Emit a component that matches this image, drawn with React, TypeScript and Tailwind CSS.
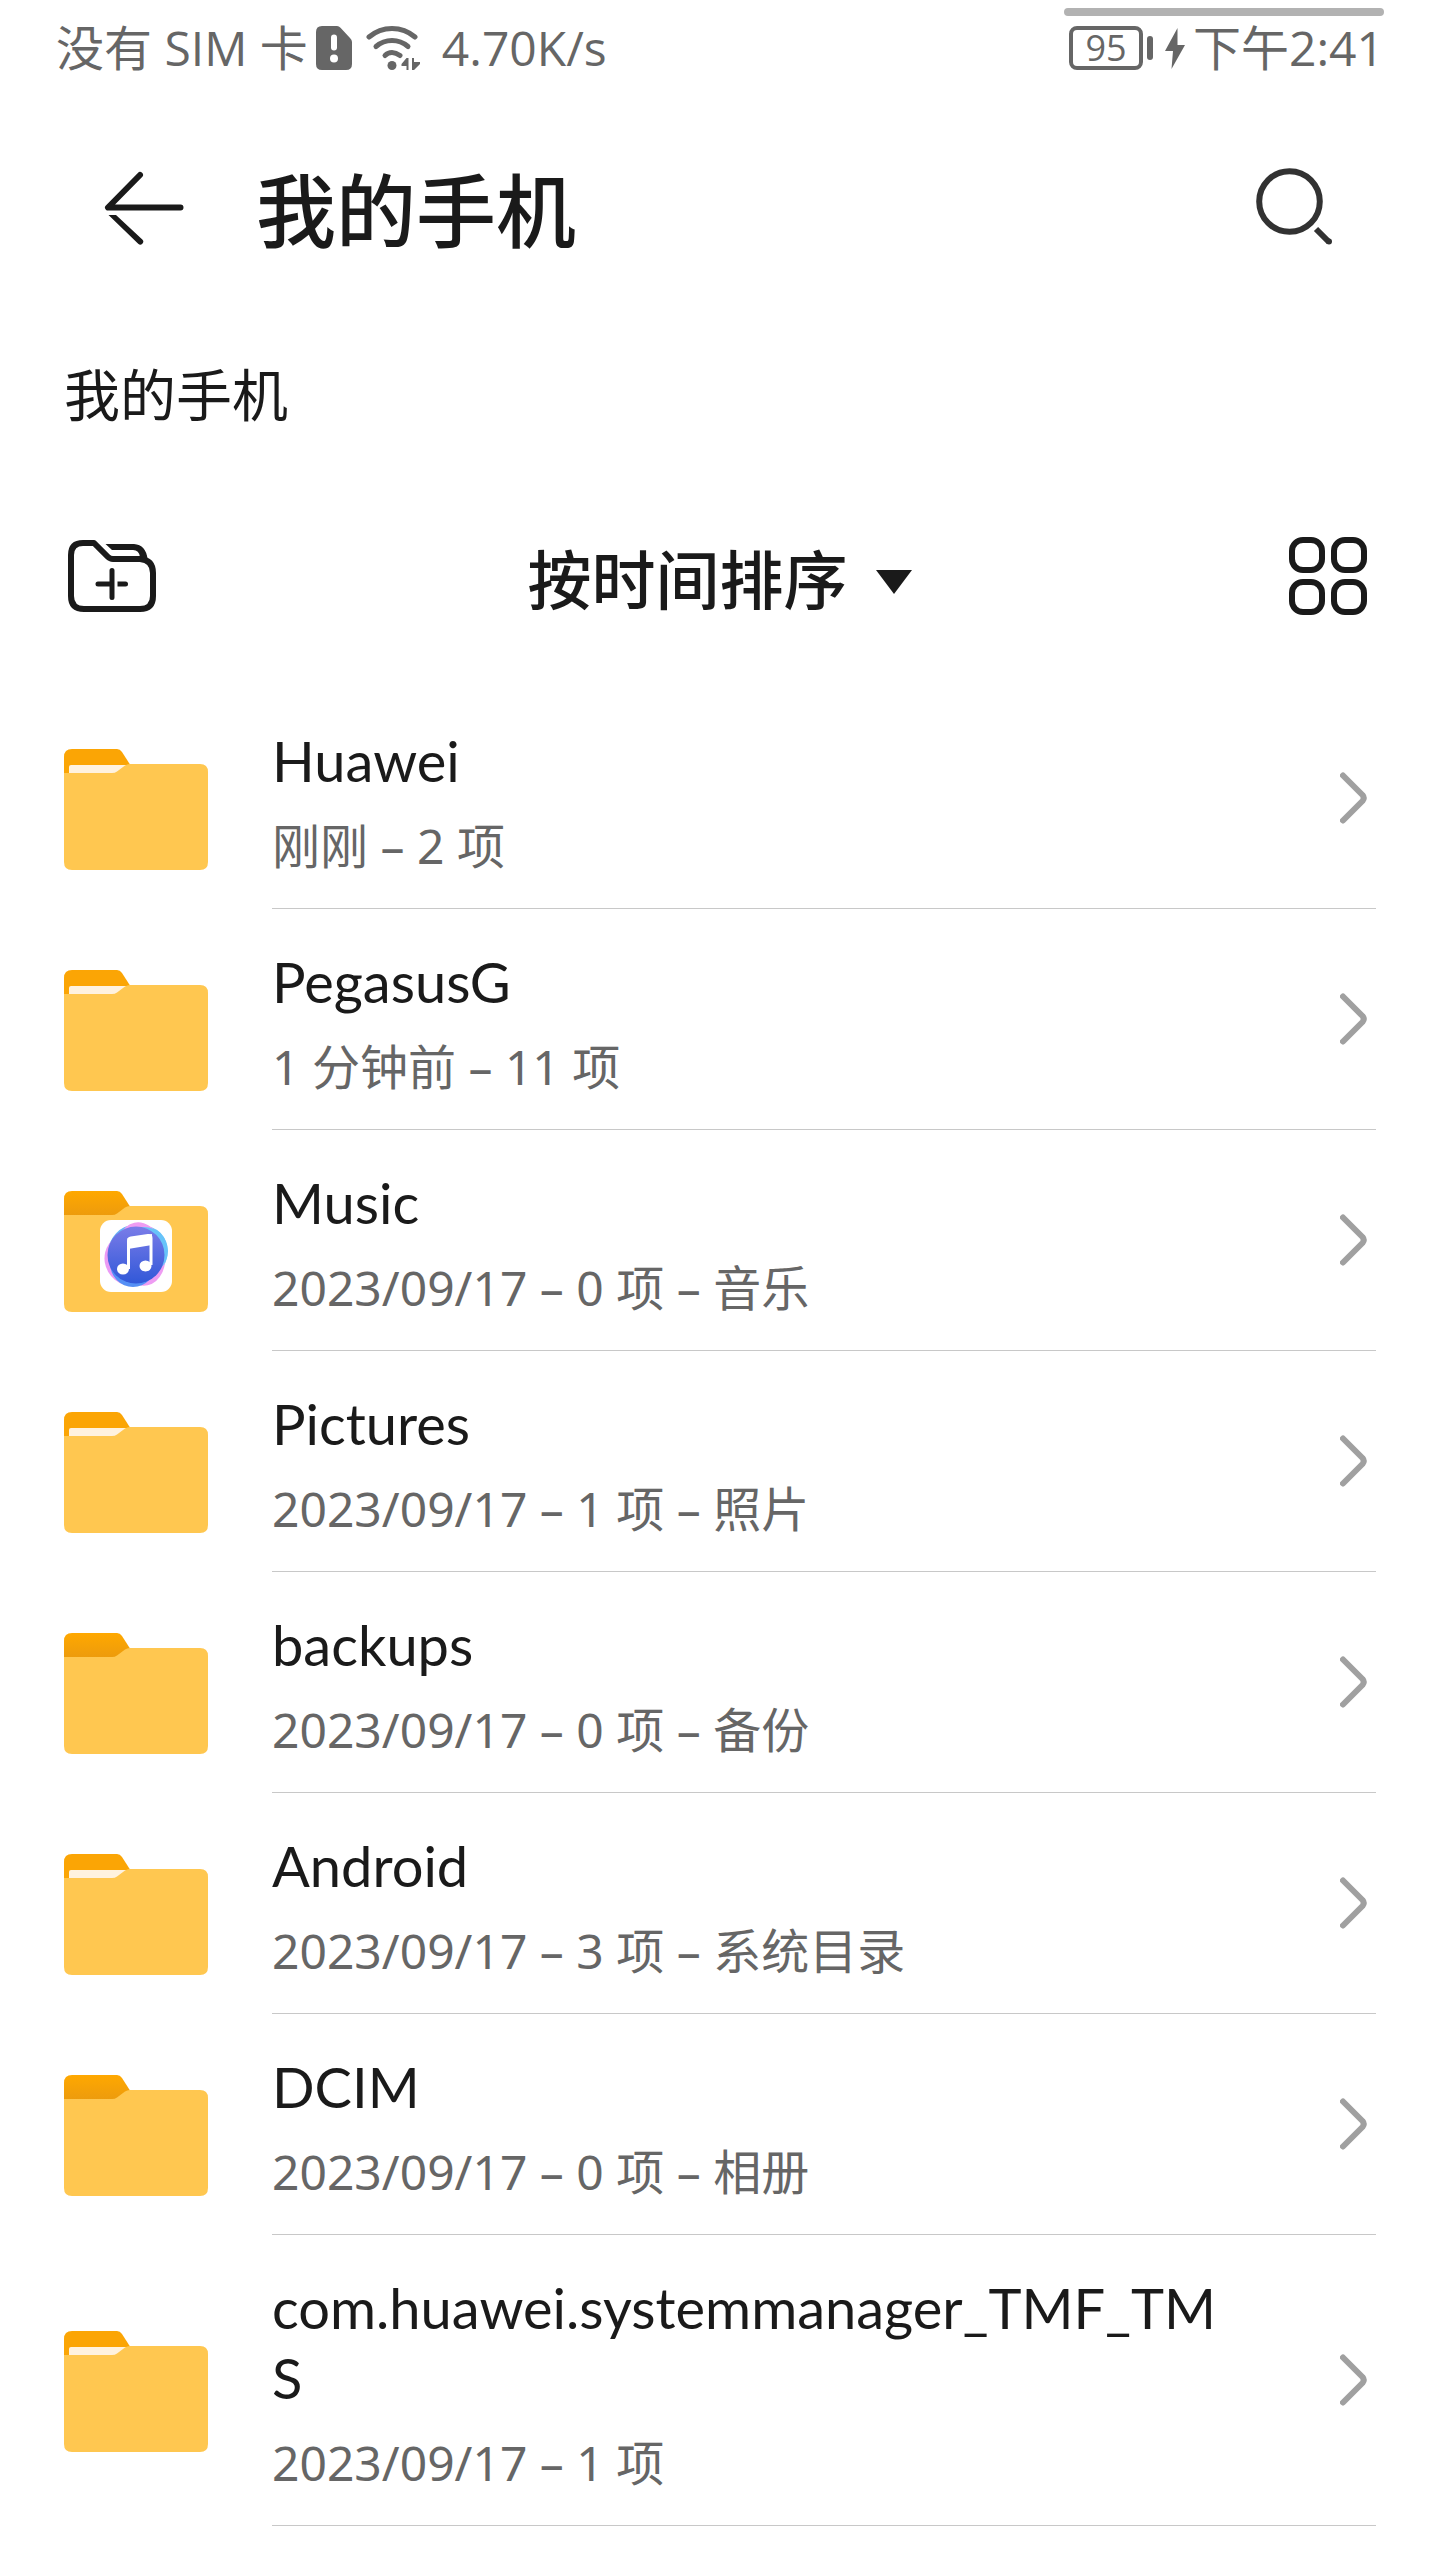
type FolderKind = "filled" | "empty" | "music";

type Entry = { name: string; detail: string; kind: FolderKind };

const entries: Entry[] = [
  { name: "Huawei", detail: "刚刚 – 2 项", kind: "filled" },
  { name: "PegasusG", detail: "1 分钟前 – 11 项", kind: "filled" },
  { name: "Music", detail: "2023/09/17 – 0 项 – 音乐", kind: "music" },
  { name: "Pictures", detail: "2023/09/17 – 1 项 – 照片", kind: "filled" },
  { name: "backups", detail: "2023/09/17 – 0 项 – 备份", kind: "empty" },
  { name: "Android", detail: "2023/09/17 – 3 项 – 系统目录", kind: "filled" },
  { name: "DCIM", detail: "2023/09/17 – 0 项 – 相册", kind: "empty" },
  { name: "com.huawei.systemmanager_TMF_TMS", detail: "2023/09/17 – 1 项", kind: "filled" },
];

function SimAlertIcon() {
  return (
    <svg className="h-11 w-9" viewBox="0 0 36 44" aria-hidden="true">
      <path d="M6 0H21Q23 0 24.500 1.800L34 12Q36 14 36 16V38Q36 44 30 44H6Q0 44 0 38V6Q0 0 6 0Z" fill="#666" />
      <path d="M18 11.500V21.500" stroke="#fff" strokeWidth="6" strokeLinecap="round" />
      <circle cx="18" cy="32.500" r="4" fill="#fff" />
    </svg>
  );
}

function WifiIcon() {
  return (
    <svg className="h-11 w-14" viewBox="0 0 56 44" aria-hidden="true">
      <g fill="none" stroke="#666" strokeWidth="5" strokeLinecap="round">
        <path d="M3 11Q13 2.500 26 2.500T49 11" />
        <path d="M10 20.500Q17 14.500 26 14.500T42 20.500" />
        <path d="M19 29.500Q22 26.500 26 26.500T34 29.500" />
      </g>
      <circle cx="26" cy="39.500" r="4.500" fill="#666" />
      <path d="M42.500 32V44H40.500V40H35.500V38L40.500 32ZM46 32H48V36H54V38L48 44H46Z" fill="#666" />
    </svg>
  );
}

function BoltIcon() {
  return (
    <svg className="h-11 w-5" viewBox="0 0 20 44" aria-hidden="true">
      <path d="M12.500 2L0 25H8L6.500 43L20 19H12.500Z" fill="#666" />
    </svg>
  );
}

function StatusBar() {
  return (
    <header className="relative flex h-24 items-center justify-between px-14 font-['Open_Sans','Noto_Sans_CJK_SC',sans-serif] text-5xl text-[#666]">
      <div className="absolute right-14 top-2 h-2 w-80 rounded-full bg-[#b2b2b2]" />
      <div className="flex items-center whitespace-nowrap">
        <span className="mr-2">没有 SIM 卡</span>
        <SimAlertIcon />
        <span className="ml-3.5 mr-5 flex">
          <WifiIcon />
        </span>
        <span>4.70K/s</span>
      </div>
      <div className="flex items-center whitespace-nowrap">
        <span className="flex h-11 w-[74px] items-center justify-center rounded-lg border-4 border-[#666] text-4xl leading-none">95</span>
        <span className="ml-1 mr-3 h-6 w-1.5 rounded-full bg-[#666]" />
        <BoltIcon />
        <span className="ml-2">下午2:41</span>
      </div>
    </header>
  );
}

function BackIcon() {
  return (
    <svg className="size-20" viewBox="0 0 80 80" fill="none" stroke="#1a1a1a" strokeWidth="6" strokeLinecap="round" aria-hidden="true">
      <path d="M36 7L4 39.500H76.500" strokeLinejoin="round" />
      <path d="M4.500 47H12L38.300 71.500A2.900 2.900 0 0 1 34.200 75.700Z" fill="#1a1a1a" stroke="none" />
    </svg>
  );
}

function SearchIcon() {
  return (
    <svg className="size-20" viewBox="0 0 80 80" fill="none" stroke="#323232" strokeWidth="6" aria-hidden="true">
      <circle cx="33.500" cy="33.500" r="30.300" />
      <path d="M60 61L73 74" />
      <circle cx="73" cy="73.500" r="3" fill="#323232" stroke="none" />
    </svg>
  );
}

function NewFolderIcon() {
  return (
    <svg className="h-[72px] w-[88px]" viewBox="0 0 88 72" fill="none" stroke="#1a1a1a" strokeWidth="6" aria-hidden="true">
      <path d="M15 3H26L39.500 16.500Q42 19 45 19H72Q85 20 85 33V56Q85 69 72 69H16Q3 69 3 56V15Q3 3 15 3Z" strokeLinejoin="round" />
      <path d="M37.500 4H66Q78 5 79.500 19L72 17Q71 10 65 10H44Z" fill="#1a1a1a" stroke="none" />
      <path d="M44 30.500V57.500M30 44H44" strokeWidth="5" strokeLinecap="round" />
      <path d="M49.500 41.500H57.500A2.500 2.500 0 0 1 57.500 46.500H49.500Z" fill="#1a1a1a" stroke="none" />
    </svg>
  );
}

function GridIcon() {
  return (
    <svg className="size-[78px]" viewBox="0 0 78 78" fill="none" stroke="#1a1a1a" strokeWidth="6" aria-hidden="true">
      <rect x="3" y="3" width="30" height="30" rx="11" />
      <rect x="45" y="3" width="30" height="30" rx="11" />
      <rect x="3" y="45" width="30" height="30" rx="11" />
      <rect x="45" y="45" width="30" height="30" rx="11" />
    </svg>
  );
}

function FolderIcon({ kind }: { kind: FolderKind }) {
  return (
    <svg className="size-36 shrink-0" viewBox="0 1 144 144" aria-hidden="true">
      <defs>
        <linearGradient id="tab" x1="0" y1="0" x2="0" y2="1">
          <stop offset="0" stopColor="#ffa800" />
          <stop offset="1" stopColor="#eb9a0e" />
        </linearGradient>
        <linearGradient id="disc" x1="0.500" y1="0" x2="0.500" y2="1">
          <stop offset="0" stopColor="#7a7ce8" />
          <stop offset="1" stopColor="#3158d8" />
        </linearGradient>
      </defs>
      <path d="M0 50V31Q0 23 8 23H53Q56 23 58 26L66 38.500L60 50Z" fill={kind === "filled" ? "#fba505" : "url(#tab)"} />
      {kind === "filled" && <path d="M5 50V41Q5 39 7 39H64L56 50Z" fill="#fff2df" />}
      <path d="M0 47H48Q51 47 53 45.500L61 39.500Q63 38 66 38H136Q144 38 144 46V136Q144 144 136 144H8Q0 144 0 136Z" fill="#ffc750" />
      {kind === "music" && (
        <g>
          <rect x="36" y="52" width="72" height="72" rx="11" fill="#fff" />
          <ellipse cx="68" cy="84" rx="24" ry="28" transform="rotate(24 68 84)" fill="#67b5f7" />
          <ellipse cx="79" cy="86" rx="24" ry="28" transform="rotate(20 79 86)" fill="#67c3f9" />
          <ellipse cx="65" cy="92" rx="24" ry="26" transform="rotate(-30 65 92)" fill="#eb9bf5" />
          <ellipse cx="77" cy="86" rx="24" ry="32" transform="rotate(-12 77 86)" fill="#ee9cf2" />
          <ellipse cx="80" cy="83" rx="24" ry="24" fill="#67c3f9" />
          <ellipse cx="69" cy="95" rx="23" ry="24" fill="#5590f5" />
          <circle cx="72" cy="87" r="28.500" fill="url(#disc)" />
          <path d="M64.500 101V73Q64.500 70.500 67 70L84 67.500Q87 67 87 70V97" fill="none" stroke="#fff" strokeWidth="3" />
          <path d="M63.500 70L88 66V77L64 81Z" fill="#fff" />
          <ellipse cx="59" cy="101" rx="6" ry="5.500" fill="#fff" />
          <ellipse cx="81.500" cy="98" rx="6" ry="5.500" fill="#fff" />
        </g>
      )}
    </svg>
  );
}

function ChevronIcon() {
  return (
    <svg className="h-14 w-7 shrink-0" viewBox="0 0 28 56" fill="none" stroke="#a0a0a0" strokeWidth="6" strokeLinecap="round" strokeLinejoin="round" aria-hidden="true">
      <path d="M3 5.500L22.500 25Q25 28 22.500 31L3 50.500" />
    </svg>
  );
}

function EntryRow({ entry }: { entry: Entry }) {
  return (
    <li>
      <a href="#" className="flex items-center gap-16">
        <FolderIcon kind={entry.kind} />
        <span className="flex min-w-0 flex-1 items-center gap-[104px] border-b border-[#c8c8c8] py-8 pr-2">
          <span className="flex min-w-0 flex-1 flex-col gap-5 pt-1.5">
            <span className="break-all font-[Lato,'Noto_Sans_CJK_SC',sans-serif] text-[56px] leading-[70px] text-[#1a1a1a]">{entry.name}</span>
            <span className="font-['Noto_Sans','Noto_Sans_CJK_SC',sans-serif] text-5xl leading-[60px] text-[#666]">{entry.detail}</span>
          </span>
          <ChevronIcon />
        </span>
      </a>
    </li>
  );
}

export default function App() {
  return (
    <div className="min-h-screen bg-white font-['Noto_Sans_CJK_SC',sans-serif] text-[#1a1a1a]">
      <StatusBar />
      <div className="flex h-56 items-center px-[104px]">
        <button aria-label="返回">
          <BackIcon />
        </button>
        <h1 className="ml-[72px] flex-1 pb-1 text-[80px] font-medium leading-none">我的手机</h1>
        <button aria-label="搜索">
          <SearchIcon />
        </button>
      </div>
      <nav aria-label="路径" className="flex h-36 items-center px-16">
        <a href="#" className="text-[56px] leading-none">我的手机</a>
      </nav>
      <div className="flex h-56 items-center justify-between pl-[68px] pr-[73px]">
        <button aria-label="新建文件夹">
          <NewFolderIcon />
        </button>
        <button className="flex items-center gap-7 pr-1.5 text-[64px] font-medium leading-none">
          按时间排序
          <svg className="mt-3 h-6 w-9" viewBox="0 0 36 24" aria-hidden="true">
            <path d="M0 0H36L18 24Z" fill="#1a1a1a" />
          </svg>
        </button>
        <button aria-label="网格视图">
          <GridIcon />
        </button>
      </div>
      <ul className="px-16">
        {entries.map((entry) => (
          <EntryRow key={entry.name} entry={entry} />
        ))}
      </ul>
    </div>
  );
}
